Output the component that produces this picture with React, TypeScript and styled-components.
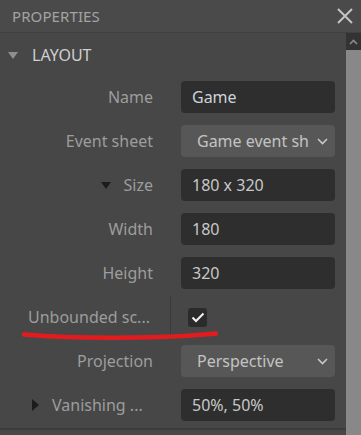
import styled, { createGlobalStyle } from "styled-components";

const GlobalStyle = createGlobalStyle`
  html, body {
    margin: 0;
    padding: 0;
    background: #474747;
  }
  * {
    box-sizing: border-box;
  }
`;

const Panel = styled.div`
  position: relative;
  width: 361px;
  height: 435px;
  display: flex;
  flex-direction: column;
  background: #474747;
  font-family: "Noto Sans", "Open Sans", sans-serif;
  overflow: hidden;
`;

const Header = styled.div`
  height: 33px;
  flex: none;
  display: flex;
  align-items: center;
  justify-content: space-between;
  padding: 0 6px 0 12px;
  background: #4a4a4a;
  border-bottom: 1px solid #3f3f3f;
`;

const Title = styled.div`
  color: #a3a3a3;
  font-size: 15px;
  letter-spacing: 0.1px;
`;

const Body = styled.div`
  flex: 1;
  display: flex;
  min-height: 0;
`;

const Content = styled.div`
  flex: 1;
  display: flex;
  flex-direction: column;
  border-bottom: 2px solid #3c3c3c;
  height: 397px;
`;

const Section = styled.div`
  height: 43px;
  display: flex;
  align-items: center;
  gap: 14px;
  padding: 1px 0 0 8px;
  color: #cfcfcf;
  font-size: 16px;
`;

const Rows = styled.div`
  display: flex;
  flex-direction: column;
  gap: 12px;
  padding: 5px 11px 0 0;
`;

const Row = styled.div`
  display: grid;
  grid-template-columns: 153px 1fr;
  column-gap: 28px;
  height: 32px;
  align-items: center;
`;

const Label = styled.div<{ $indent?: number; $align?: string }>`
  display: flex;
  align-items: center;
  justify-content: ${(p) => p.$align || "flex-end"};
  gap: 13px;
  padding-left: ${(p) => p.$indent || 0}px;
  color: #9d9d9d;
  font-size: 16px;
  white-space: nowrap;
`;

const Input = styled.div`
  height: 32px;
  display: flex;
  align-items: center;
  padding-left: 11px;
  background: #2e2e2e;
  border-radius: 4px;
  color: #c8c8c8;
  font-size: 16px;
`;

const Select = styled(Input)`
  background: #575757;
  padding: 0 7px 0 16px;
  justify-content: space-between;
  color: #c3c3c3;
`;

const CheckCell = styled.div`
  position: relative;
  height: 32px;
  display: flex;
  align-items: center;
  padding-left: 7px;
  &::before {
    content: "";
    position: absolute;
    left: -11px;
    top: -5px;
    width: 1px;
    height: 42px;
    background: #3a3a3a;
  }
`;

const CheckBox = styled.div`
  width: 19px;
  height: 19px;
  border-radius: 3px;
  background: #2b2b2b;
  display: flex;
  align-items: center;
  justify-content: center;
`;

const Scrollbar = styled.div`
  width: 15px;
  flex: none;
  display: flex;
  flex-direction: column;
`;

const ScrollButton = styled.div`
  height: 17px;
  background: #333333;
  display: flex;
  align-items: center;
  justify-content: center;
`;

const Thumb = styled.div`
  flex: 1;
  background: #888888;
`;

const Annotation = styled.svg`
  position: absolute;
  left: 0;
  top: 0;
  pointer-events: none;
`;

const Tri = ({ dir, color }: { dir: "down" | "right"; color: string }) =>
  dir === "down" ? (
    <svg width="10" height="7" viewBox="0 0 10 7">
      <path d="M0 0 L10 0 L5 7 Z" fill={color} />
    </svg>
  ) : (
    <svg width="7" height="12" viewBox="0 0 7 12">
      <path d="M0 0 L7 6 L0 12 Z" fill={color} />
    </svg>
  );

const Chevron = () => (
  <svg width="11" height="7" viewBox="0 0 11 7">
    <path d="M1 1 L5.5 5.5 L10 1" stroke="#c8c8c8" strokeWidth="1.6" fill="none" />
  </svg>
);

export default function App() {
  return (
    <Panel>
      <GlobalStyle />
      <Header>
        <Title>PROPERTIES</Title>
        <svg width="20" height="20" viewBox="0 0 20 20">
          <path d="M3 3 L17 17 M17 3 L3 17" stroke="#c4c4c4" strokeWidth="2" />
        </svg>
      </Header>
      <Body>
        <Content>
          <Section>
            <Tri dir="down" color="#8e8e8e" />
            LAYOUT
          </Section>
          <Rows>
            <Row>
              <Label>Name</Label>
              <Input style={{ color: "#cdd3da" }}>Game</Input>
            </Row>
            <Row>
              <Label>Event sheet</Label>
              <Select>
                Game event sh
                <Chevron />
              </Select>
            </Row>
            <Row>
              <Label>
                <Tri dir="down" color="#1c1c1c" />
                Size
              </Label>
              <Input>180 x 320</Input>
            </Row>
            <Row>
              <Label>Width</Label>
              <Input>180</Input>
            </Row>
            <Row>
              <Label>Height</Label>
              <Input>320</Input>
            </Row>
            <Row>
              <Label $indent={28} $align="flex-start">
                Unbounded sc...
              </Label>
              <CheckCell>
                <CheckBox>
                  <svg width="14" height="11" viewBox="0 0 14 11">
                    <path d="M1.5 5.5 L5 9 L12.5 1.5" stroke="#f2f2f2" strokeWidth="2" fill="none" />
                  </svg>
                </CheckBox>
              </CheckCell>
            </Row>
            <Row>
              <Label>Projection</Label>
              <Select>
                Perspective
                <Chevron />
              </Select>
            </Row>
            <Row>
              <Label $indent={32} $align="flex-start">
                <Tri dir="right" color="#1c1c1c" />
                Vanishing ...
              </Label>
              <Input>50%, 50%</Input>
            </Row>
          </Rows>
        </Content>
        <Scrollbar>
          <ScrollButton>
            <svg width="9" height="6" viewBox="0 0 9 6">
              <path d="M1 5 L4.5 1.5 L8 5" stroke="#8a8a8a" strokeWidth="1.6" fill="none" />
            </svg>
          </ScrollButton>
          <Thumb />
        </Scrollbar>
      </Body>
      <Annotation width="361" height="435">
        <path
          d="M24 334.5 C60 337.5 110 338.5 160 337 C190 336 205 334.5 216 333.5"
          stroke="#e41b1e"
          strokeWidth="4.5"
          strokeLinecap="round"
          fill="none"
        />
      </Annotation>
    </Panel>
  );
}
